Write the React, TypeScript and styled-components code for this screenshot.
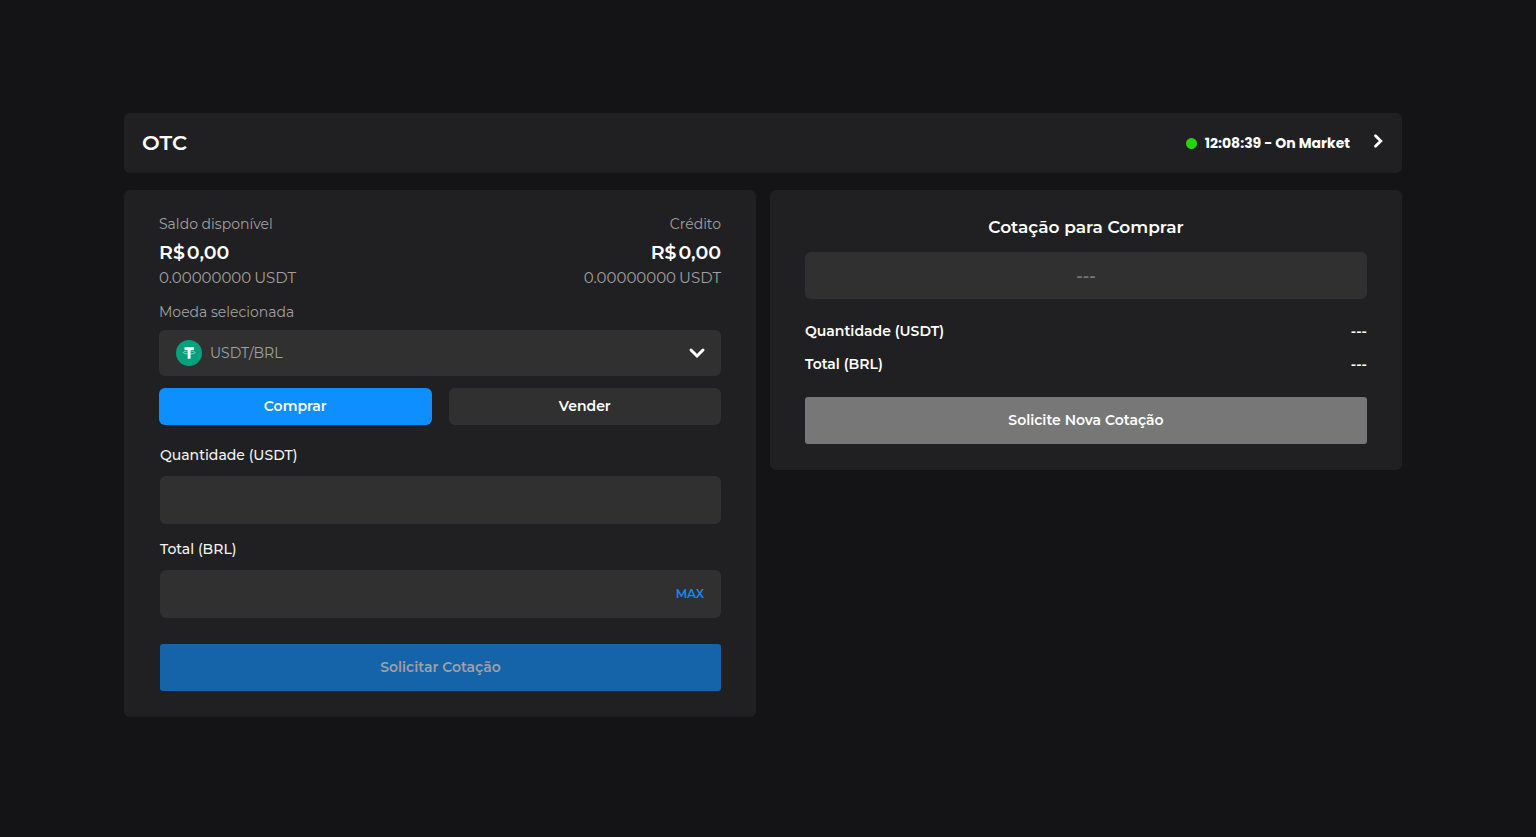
import React, { useState } from "react";
import styled, { createGlobalStyle } from "styled-components";

const GlobalStyle = createGlobalStyle`
  *, *::before, *::after { box-sizing: border-box; }
  body {
    margin: 0;
    background: #141416;
    color: #fff;
    font-family: Montserrat, Inter, "Liberation Sans", sans-serif;
    font-size: 14px;
    line-height: 20px;
  }
  button, input, select { font: inherit; color: inherit; }
`;

const Page = styled.main`
  display: flex;
  flex-direction: column;
  gap: 17px;
  padding: 113px 134px 48px 124px;
`;

const Panel = styled.section`
  background: #202022;
  border-radius: 6px;
`;

const TopBar = styled(Panel).attrs({ as: "header" })`
  display: flex;
  align-items: center;
  justify-content: space-between;
  min-height: 60px;
  padding: 0 16px 0 18px;
`;

const PageTitle = styled.h1`
  margin: 0;
  font-size: 21px;
  line-height: 28px;
  font-weight: 600;
`;

const Status = styled.div`
  display: flex;
  align-items: center;
  gap: 8px;
  font-family: Poppins, Inter, "Liberation Sans", sans-serif;
  font-weight: 700;
`;

const Dot = styled.span`
  width: 11px;
  height: 11px;
  border-radius: 50%;
  background: #26d308;
`;

const NextButton = styled.button`
  display: flex;
  margin-left: 12px;
  padding: 0 0 4px;
  border: 0;
  background: none;
  cursor: pointer;
`;

const Columns = styled.div`
  display: grid;
  grid-template-columns: 1fr 1fr;
  align-items: start;
  gap: 14px;
`;

const Card = styled(Panel)`
  padding: 24px 35px 26px;
`;

const Balances = styled.div`
  display: flex;
  justify-content: space-between;
  margin-bottom: 13px;
`;

const Balance = styled.div<{ $end?: boolean }>`
  display: flex;
  flex-direction: column;
  align-items: ${(p) => (p.$end ? "flex-end" : "flex-start")};
`;

const Muted = styled.span`
  color: #a0a0a1;
`;

const Amount = styled.strong`
  display: flex;
  gap: 2px;
  margin-top: 5px;
  font-size: 19px;
  line-height: 28px;
  font-weight: 600;
`;

const CryptoAmount = styled.span`
  display: flex;
  gap: 3px;
  color: #a0a0a1;
  font-size: 15px;
  line-height: 22px;
`;

const PairLabel = styled.label`
  display: block;
  margin-bottom: 8px;
  color: #a0a0a1;
`;

const PairField = styled.div`
  display: grid;
  align-items: center;
  margin-bottom: 12px;
  > * { grid-area: 1 / 1; }
`;

const PairSelect = styled.select`
  width: 100%;
  height: 46px;
  padding: 0 48px 0 51px;
  border: 0;
  border-radius: 6px;
  background: #303030;
  color: #a0a0a1;
  appearance: none;
`;

const PairIcon = styled.svg`
  margin-left: 17px;
  pointer-events: none;
`;

const Chevron = styled.svg`
  justify-self: end;
  margin-right: 15px;
  pointer-events: none;
`;

const Sides = styled.div`
  display: grid;
  grid-template-columns: 1fr 1fr;
  gap: 17px;
  margin-bottom: 20px;
`;

const SideButton = styled.button<{ $active: boolean }>`
  height: 37px;
  padding: 0 16px 2px;
  border: 0;
  border-radius: 6px;
  background: ${(p) => (p.$active ? "#0d8fff" : "#303030")};
  font-weight: 600;
  cursor: pointer;
`;

const Form = styled.form`
  padding: 0 0 0 1px;
`;

const FieldLabel = styled.label`
  display: block;
  margin-bottom: 11px;
  font-weight: 500;
  color: #f4f4f4;
`;

const Field = styled.div`
  display: flex;
  height: 48px;
  margin-bottom: 15px;
  border-radius: 6px;
  background: #303030;
`;

const FieldInput = styled.input`
  flex: 1;
  min-width: 0;
  padding: 0 16px;
  border: 0;
  background: none;
`;

const MaxButton = styled.button`
  padding: 0 17px;
  border: 0;
  background: none;
  color: #128af3;
  font-size: 12px;
  font-weight: 600;
  cursor: pointer;
`;

const WideButton = styled.button<{ $tone: "blue" | "grey" }>`
  display: block;
  width: 100%;
  height: 47px;
  padding: 0 16px 2px;
  border: 0;
  border-radius: 3px;
  background: ${(p) => (p.$tone === "blue" ? "#1563a8" : "#777777")};
  color: ${(p) => (p.$tone === "blue" ? "#a0a0a2" : "#ffffff")};
  font-weight: 600;
`;

const SubmitButton = styled(WideButton)`
  margin-top: 26px;
`;

const QuoteTitle = styled.h2`
  margin: 0 0 12px;
  font-size: 17px;
  line-height: 26px;
  font-weight: 600;
  text-align: center;
`;

const QuoteBox = styled.output`
  display: flex;
  align-items: center;
  justify-content: center;
  height: 47px;
  margin-bottom: 22px;
  border-radius: 6px;
  background: #303030;
  color: #777777;
  font-size: 17px;
  font-weight: 600;
`;

const Summary = styled.dl`
  display: grid;
  gap: 13px;
  margin: 0 0 23px;
`;

const SummaryRow = styled.div`
  display: flex;
  justify-content: space-between;
  font-weight: 600;
  dd { margin: 0; }
`;

type Side = "Comprar" | "Vender";
const sides: Side[] = ["Comprar", "Vender"];

function BalanceBlock({ label, end }: { label: string; end?: boolean }) {
  return (
    <Balance $end={end}>
      <Muted>{label}</Muted>
      <Amount>
        <span>R$</span>
        <span>0,00</span>
      </Amount>
      <CryptoAmount>
        <span>0.00000000</span>
        <span>USDT</span>
      </CryptoAmount>
    </Balance>
  );
}

export default function App() {
  const [side, setSide] = useState<Side>("Comprar");

  return (
    <>
      <GlobalStyle />
      <Page>
        <TopBar>
          <PageTitle>OTC</PageTitle>
          <Status>
            <Dot />
            <span>12:08:39 - On Market</span>
            <NextButton type="button" aria-label="Abrir mercado">
              <svg
                width="16"
                height="16"
                viewBox="0 0 16 16"
                fill="none"
                stroke="#fff"
                strokeWidth="2.8"
                strokeLinecap="round"
              >
                <path d="M5.500 2.700 L10.800 8 L5.500 13.300" />
              </svg>
            </NextButton>
          </Status>
        </TopBar>

        <Columns>
          <Card>
            <Balances>
              <BalanceBlock label="Saldo disponível" />
              <BalanceBlock label="Crédito" end />
            </Balances>

            <PairLabel htmlFor="pair">Moeda selecionada</PairLabel>
            <PairField>
              <PairSelect id="pair">
                <option>USDT/BRL</option>
              </PairSelect>
              <PairIcon width="26" height="26" viewBox="0 0 26 26" aria-hidden="true">
                <circle cx="13" cy="13" r="13" fill="#06a17c" />
                <path fill="#fff" d="M8.500 7.300h9.400v2.600h-3.300v8.900h-2.900v-8.900H8.500z" />
                <ellipse cx="13.200" cy="12.500" rx="6" ry="1.500" fill="none" stroke="#fff" strokeOpacity="0.800" strokeWidth="0.600" />
              </PairIcon>
              <Chevron
                width="18"
                height="18"
                viewBox="0 0 18 18"
                fill="none"
                stroke="#fff"
                strokeWidth="3"
                strokeLinecap="round"
                aria-hidden="true"
              >
                <path d="M3 6 L9 12 L15 6" />
              </Chevron>
            </PairField>

            <Sides>
              {sides.map((name) => (
                <SideButton
                  key={name}
                  type="button"
                  $active={side === name}
                  aria-pressed={side === name}
                  onClick={() => setSide(name)}
                >
                  {name}
                </SideButton>
              ))}
            </Sides>

            <Form onSubmit={(e) => e.preventDefault()}>
              <FieldLabel htmlFor="quantity">Quantidade (USDT)</FieldLabel>
              <Field>
                <FieldInput id="quantity" type="text" inputMode="decimal" />
              </Field>
              <FieldLabel htmlFor="total">Total (BRL)</FieldLabel>
              <Field>
                <FieldInput id="total" type="text" inputMode="decimal" />
                <MaxButton type="button">MAX</MaxButton>
              </Field>
              <SubmitButton $tone="blue" type="submit" disabled>
                Solicitar Cotação
              </SubmitButton>
            </Form>
          </Card>

          <Card>
            <QuoteTitle>Cotação para {side}</QuoteTitle>
            <QuoteBox>---</QuoteBox>
            <Summary>
              <SummaryRow>
                <dt>Quantidade (USDT)</dt>
                <dd>---</dd>
              </SummaryRow>
              <SummaryRow>
                <dt>Total (BRL)</dt>
                <dd>---</dd>
              </SummaryRow>
            </Summary>
            <WideButton $tone="grey" type="button">
              Solicite Nova Cotação
            </WideButton>
          </Card>
        </Columns>
      </Page>
    </>
  );
}
